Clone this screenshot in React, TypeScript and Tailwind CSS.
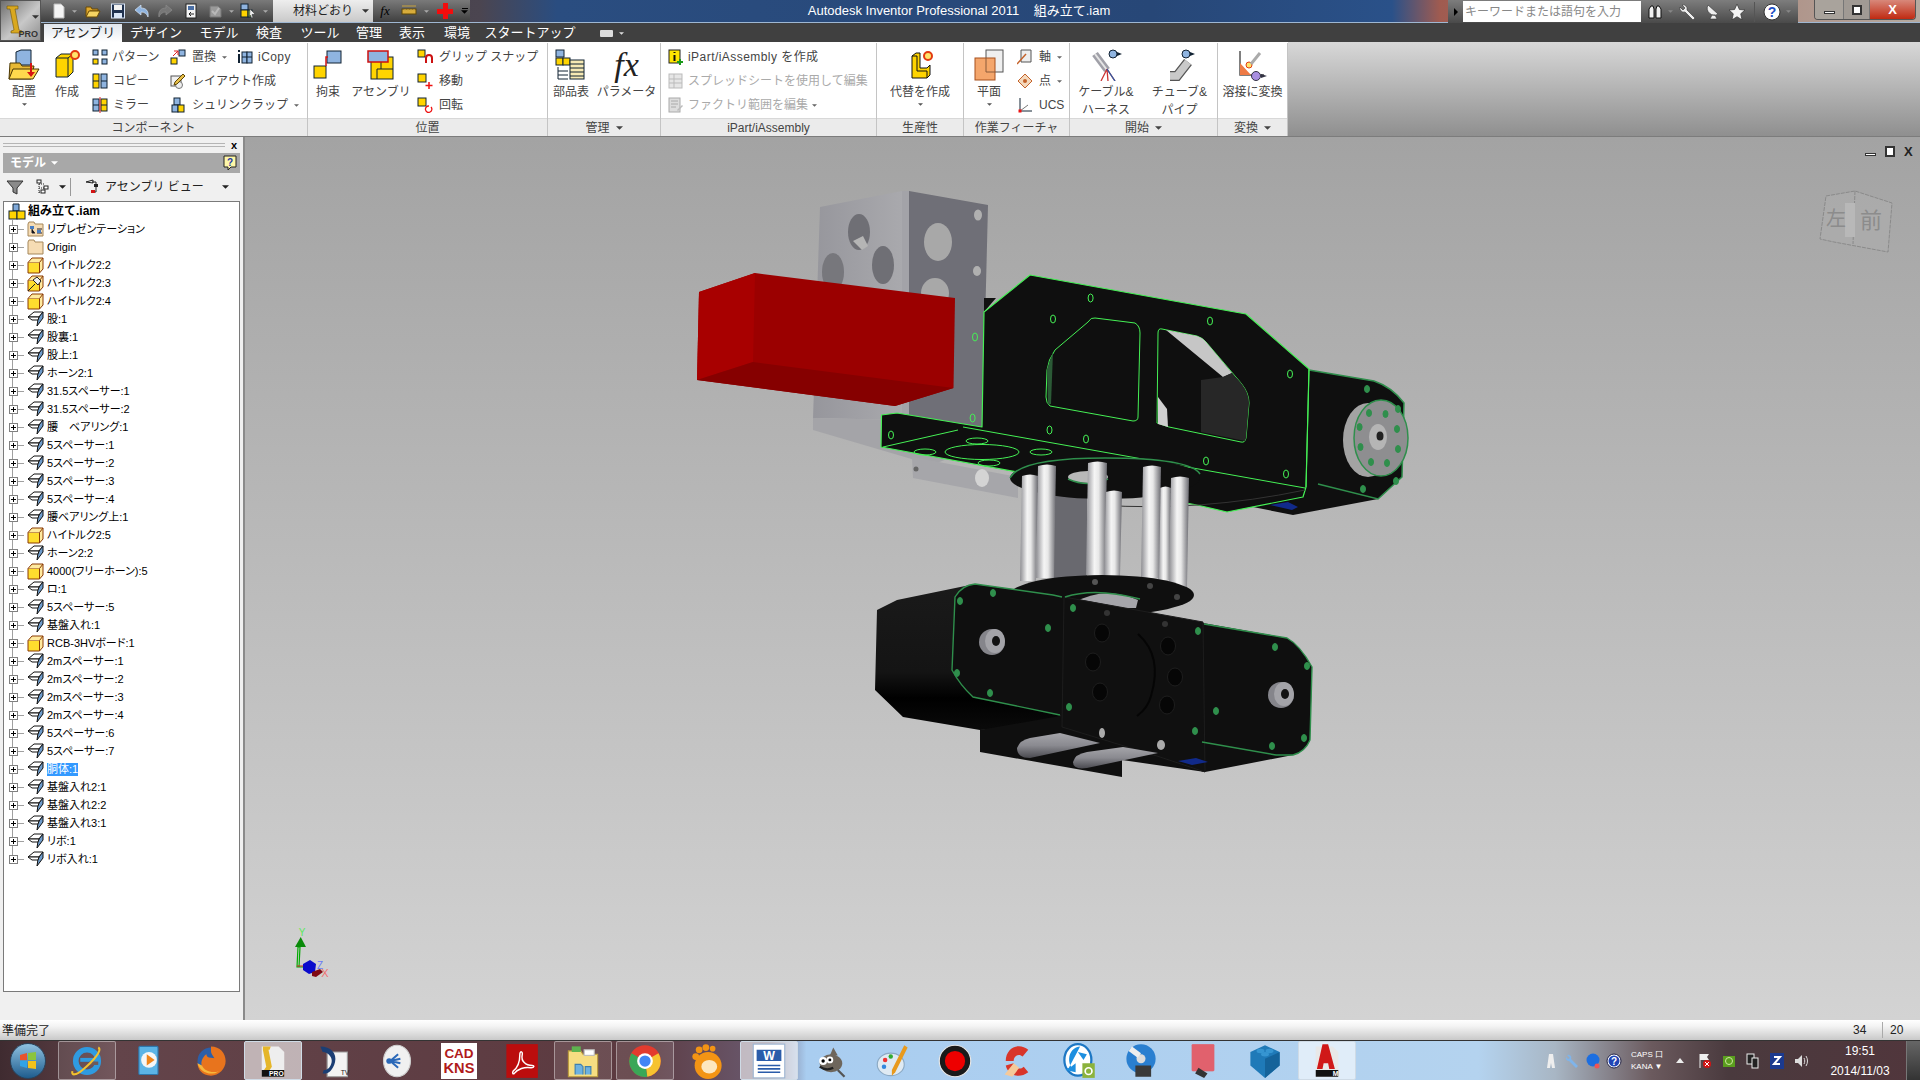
import React from "react";

const Tri = ({ c = "#444", s = 3 }: { c?: string; s?: number }) => (
  <svg width={s * 2 + 1} height={s + 1} viewBox="0 0 6 3" className="shrink-0"><path d="M0 0h6L3 3z" fill={c} /></svg>
);

/* ---------- quick access icons ---------- */
const Qi = ({ n }: { n: string }) => {
  const v: Record<string, React.ReactNode> = {
    doc: <path d="M3 1h7l3 3v11H3z" fill="#f4f4f4" stroke="#bbb" />,
    open: <><path d="M1 4h5l1 2h6v2H5L2 13H1z" fill="#e0a92c" stroke="#6b4a05" /><path d="M4 8h11l-3 6H1z" fill="#f6d463" stroke="#6b4a05" /></>,
    save: <><rect x="1.5" y="1" width="13" height="14" fill="#20324f" stroke="#d7e3f5" /><rect x="4" y="2" width="8" height="5" fill="#f2f2f2" /><rect x="4" y="10" width="8" height="5" fill="#d9e6f7" /></>,
    undo: <path d="M1 7l6-5v3c5 0 8 3 7 9-1-3-3-5-7-5v3z" fill="#8fb4e0" stroke="#d8e6f7" strokeWidth=".7" />,
    redo: <path d="M15 7L9 2v3C4 5 1 8 2 14c1-3 3-5 7-5v3z" fill="#777" stroke="#8d8d8d" strokeWidth=".7" />,
    ret: <><rect x="3" y="1" width="10" height="14" fill="#f4f4f4" stroke="#222" /><rect x="5" y="3" width="6" height="4" fill="#4a6fa5" /><path d="M11 11H6M8 9l-2 2 2 2" stroke="#222" fill="none" /></>,
    upd: <><path d="M3 3h8l3 3v8H3z" fill="#9a9a9a" stroke="#777" /><path d="M5 8l3 3 4-6" stroke="#b9b9b9" strokeWidth="2" fill="none" /></>,
    sel: <><rect x="1" y="1" width="7" height="6" fill="#8fb4e0" stroke="#123" /><rect x="1" y="7" width="7" height="7" fill="#ffd400" stroke="#123" /><rect x="8" y="7" width="4" height="7" fill="#7ea83c" stroke="#123" /><path d="M10 6l5 5-3 .5 1 3-1.500.5-1-3-1 1z" fill="#eee" stroke="#333" strokeWidth=".5" /></>,
    meas: <><rect x="1" y="6" width="14" height="5" fill="#d9ad3b" stroke="#5d4606" /><path d="M1 3h14M4 6v2M7 6v2M10 6v2M13 6v2" stroke="#caa540" fill="none" /></>,
    plus: <path d="M6 0h5v6h5v5h-5v5H6v-5H0V6h6z" fill="#f20d0d" />,
  };
  return <svg width="16" height="16" viewBox="0 0 16 16">{v[n]}</svg>;
};

/* ---------- ribbon icons ---------- */
const Ri = ({ n }: { n: string }) => {
  const v: Record<string, React.ReactNode> = {
    pattern: <><rect x="1" y="1" width="5" height="5" fill="#8fb4e0" stroke="#123" /><rect x="10" y="1" width="5" height="5" fill="#8fb4e0" stroke="#123" /><rect x="1" y="10" width="5" height="5" fill="#ffd400" stroke="#123" /><rect x="10" y="10" width="5" height="5" fill="#8fb4e0" stroke="#123" /></>,
    copy: <><rect x="1" y="1" width="6" height="14" fill="#ffd400" stroke="#123" /><rect x="9" y="1" width="6" height="14" fill="#8fb4e0" stroke="#123" /><path d="M1 8h6M9 8h6" stroke="#123" /></>,
    mirror: <><rect x="1" y="2" width="6" height="12" fill="#8fb4e0" stroke="#123" /><rect x="9" y="2" width="6" height="12" fill="#ffd400" stroke="#123" /><path d="M8 0v16" stroke="#d22" /><path d="M1 8h6M9 8h6" stroke="#123" /></>,
    replace: <><rect x="1" y="9" width="6" height="6" fill="#ffd400" stroke="#123" /><rect x="9" y="1" width="6" height="6" fill="#8fb4e0" stroke="#123" /><path d="M3 7l5-5M4 2h4v4" stroke="#d22" fill="none" /></>,
    icopy: <><path d="M2 1v2M2 5v9" stroke="#123" strokeWidth="2" /><rect x="5" y="3" width="5" height="11" fill="#8fb4e0" stroke="#123" /><rect x="10" y="3" width="5" height="11" fill="#8fb4e0" stroke="#123" /><path d="M5 8h10" stroke="#123" /></>,
    layout: <><rect x="1" y="3" width="10" height="10" fill="#f0f0f0" stroke="#555" /><circle cx="9" cy="12" r="3.500" fill="#eee" stroke="#777" /><path d="M5 9l8-8 2 2-8 8-3 1z" fill="#e8c04a" stroke="#5d4606" /></>,
    shrink: <><rect x="4" y="1" width="6" height="7" fill="#8fb4e0" stroke="#123" /><rect x="2" y="8" width="6" height="7" fill="#8fb4e0" stroke="#123" /><rect x="8" y="8" width="6" height="7" fill="#ffd400" stroke="#123" /></>,
    grip: <><rect x="1" y="1" width="7" height="7" fill="#ffd400" stroke="#123" /><path d="M9 14V9a3 3 0 0 1 6 0v5" stroke="#c11" strokeWidth="2" fill="none" /></>,
    move: <><rect x="1" y="1" width="8" height="8" fill="#ffd400" stroke="#123" /><path d="M12 9v7M8.500 12.500h7" stroke="#e11" strokeWidth="1.500" /></>,
    rot: <><rect x="1" y="1" width="8" height="8" fill="#ffd400" stroke="#123" /><path d="M14 10a3.200 3.200 0 1 1-2-1" stroke="#e11" strokeWidth="1.300" fill="none" /></>,
    ipart: <><rect x="1" y="1" width="11" height="13" fill="#ffe600" stroke="#222" /><path d="M6.500 3v1M6.500 6v6" stroke="#111" strokeWidth="2" /><path d="M12 10v6M9 13h6" stroke="#1b9a1b" strokeWidth="2" /></>,
    sheet: <><rect x="1" y="1" width="13" height="14" fill="#e6e6e6" stroke="#bbb" /><path d="M1 6h13M1 10h13M6 1v14" stroke="#bbb" /></>,
    fact: <><rect x="1" y="1" width="11" height="14" fill="#ddd" stroke="#aaa" /><path d="M3 4h7M3 7h7M3 10h5" stroke="#aaa" /><path d="M9 13l5-5 1 1-5 5z" fill="#bbb" /></>,
    axis: <><path d="M4 1h10v12H4z" fill="#eee" stroke="#555" /><path d="M0 15L9 5" stroke="#c4622a" strokeWidth="1.500" /></>,
    point: <><path d="M8 1l7 7-7 7-7-7z" fill="#f4d9bd" stroke="#c4622a" /><circle cx="8" cy="8" r="2" fill="#c4622a" /></>,
    ucs: <><path d="M3 1v13h12" stroke="#123" fill="none" /><path d="M3 14l8-6" stroke="#777" /><rect x="1.500" y="12.500" width="3" height="3" fill="#e11" /></>,
  };
  return <svg width="16" height="16" viewBox="0 0 16 16" className="shrink-0">{v[n]}</svg>;
};
const Li = ({ n }: { n: string }) => {
  const v: Record<string, React.ReactNode> = {
    place: <><path d="M8 3l5-2h10v15H8z" fill="#8fb4e0" stroke="#123" /><path d="M2 14h10l2 3h12l-3 13H1z" fill="#e8b935" stroke="#4a3602" /><path d="M5 20h26l-6 10H1z" fill="#ffd94d" stroke="#4a3602" /><path d="M22 14v9h-3l4 5 4-5h-3v-9z" fill="#d61414" /></>,
    make: <><path d="M5 9l5-4h12v18l-5 5H5z" fill="#ffd400" stroke="#123" /><path d="M5 9h12v19M17 9l5-4" stroke="#123" fill="none" /><circle cx="24" cy="6" r="4" fill="#ffe46b" stroke="#e23a10" strokeWidth="2" /></>,
    con: <><rect x="2" y="17" width="12" height="12" fill="#ffd400" stroke="#123" /><rect x="15" y="2" width="14" height="12" fill="#8fb4e0" stroke="#123" /><path d="M14 17V8h2" stroke="#d21414" strokeWidth="1.500" fill="none" /></>,
    asm: <><rect x="6" y="8" width="22" height="22" fill="#ffd400" stroke="#123" /><path d="M16 8v12h12v-0M16 20h-4v10" stroke="#123" fill="none" /><rect x="3" y="2" width="20" height="11" fill="#8fb4e0" stroke="#c11" strokeWidth="1.500" /></>,
    bom: <><rect x="1" y="1" width="8" height="7" fill="#8fb4e0" stroke="#123" /><rect x="1" y="9" width="7" height="7" fill="#ffd400" stroke="#123" /><rect x="8" y="9" width="7" height="7" fill="#ffd400" stroke="#123" /><rect x="15" y="11" width="14" height="19" fill="#f6e9b4" stroke="#123" /><path d="M15 15h14M15 19h14M15 23h14M15 27h14M3 18v12M3 22h10M3 26h10M3 30h10" stroke="#123" fill="none" /></>,
    alt: <><path d="M8 7l4-3h4v15h7l3-3v10l-3 3H8z" fill="#ffd400" stroke="#111" /><path d="M8 7h5v15h10v7" stroke="#111" fill="none" /><circle cx="24" cy="7" r="4" fill="#ffe46b" stroke="#e23a10" strokeWidth="2" /></>,
    plane: <><rect x="13" y="1" width="17" height="22" fill="#efefef" stroke="#555" /><rect x="2" y="9" width="20" height="22" fill="#f4a66c" stroke="#a8501c" /><path d="M13 9v14h9" stroke="#8a5a3a" fill="none" /></>,
    cable: <><path d="M5 5l12 16" stroke="#a0a0a8" strokeWidth="7" /><path d="M5 5l12 16" stroke="#e5e5e5" strokeWidth="2" /><path d="M17 20l-6 12M17 20l1 12M17 20l8 12" stroke="#c33" strokeWidth="1.300" /><path d="M17 20l8 12" stroke="#2a5ca8" strokeWidth="1.300" /><circle cx="23" cy="5" r="4" fill="#8fb4e0" stroke="#123" /><path d="M27 3l5 2-5 2z" fill="#123" /></>,
    tube: <><path d="M6 27h7L24 13" stroke="#555" strokeWidth="10" fill="none" /><path d="M6 27h7L24 13" stroke="#c9c9c9" strokeWidth="7.500" fill="none" /><circle cx="22" cy="5" r="4" fill="#8fb4e0" stroke="#123" /><path d="M26 3l5 2-5 2z" fill="#123" /></>,
    weld: <><path d="M3 2v24h24" stroke="#555" strokeWidth="1.500" fill="none" /><path d="M3 14l11 12H3z" fill="#ee7a45" /><circle cx="12" cy="16" r="3" fill="#ffe46b" stroke="#e23a10" /><path d="M14 15l9-11" stroke="#aaa" strokeWidth="3" /><circle cx="19" cy="27" r="4.500" fill="#a88ee0" stroke="#334" /><path d="M24 25l6 2-6 2z" fill="#334" /></>,
  };
  return <svg width="32" height="32" viewBox="0 0 32 32">{v[n]}</svg>;
};

const Large = ({ w, n, lines, chev, fx }: { w: number; n?: string; lines: string[]; chev?: boolean; fx?: boolean }) => (
  <div className="flex shrink-0 flex-col items-center pt-[6px]" style={{ width: w }}>
    <div className="mb-[3px] flex h-[32px] items-center justify-center">
      {fx ? <span className="font-['Liberation_Serif',serif] text-[34px] italic leading-[32px] text-[#222]">fx</span> : <Li n={n!} />}
    </div>
    <div className="flex flex-col items-center gap-px">
      {lines.map((l) => <div key={l} className="h-[17px] whitespace-nowrap text-[12px] leading-[17px] text-[#444]">{l}</div>)}
    </div>
    {chev && <div className="mt-[2px]"><Tri c="#555" s={2} /></div>}
  </div>
);
const Small = ({ n, t, off, chev, gap = 6, wide }: { n: string; t: string; off?: boolean; chev?: boolean; gap?: number; wide?: boolean }) => (
  <div className={`flex h-[24px] items-center whitespace-nowrap text-[12px] ${off ? "text-[#aaaaaa]" : "text-[#444]"}`} style={{ gap }}>
    <Ri n={n} /><span className={wide ? "tracking-[0.45px]" : ""}>{t}</span>{chev && <Tri c="#666" s={2} />}
  </div>
);
const Panel = ({ w, title, chev, children }: { w: number; title: string; chev?: boolean; children: React.ReactNode }) => (
  <div className="flex shrink-0 flex-col border-r border-[#c4c4c4]" style={{ width: w }}>
    <div className="flex h-[75px] bg-white">{children}</div>
    <div className="flex h-[18px] items-center justify-center gap-[6px] border-t border-[#d8d8d8] bg-[#ebebeb] text-[12px] text-[#444]">
      <span>{title}</span>{chev && <Tri c="#444" s={3} />}
    </div>
  </div>
);

/* ---------- tree ---------- */
const PartIcon = () => (
  <svg width="17" height="16" viewBox="0 0 17 16" className="shrink-0"><path d="M1 6l6-5h9l-4 5z" fill="#fff" stroke="#111" /><path d="M12 6l4-5v6l-6 8 1-7z" fill="#6f9ccb" stroke="#111" /><path d="M1 6h11l-1 3H5z" fill="#fff" stroke="#111" /></svg>
);
const CubeIcon = ({ pin }: { pin?: boolean }) => (
  <svg width="17" height="17" viewBox="0 0 17 17" className="shrink-0"><path d="M1 5.500h11.500V16H1z" fill="#ffdd2e" stroke="#8a3a05" /><path d="M1 5.500L5 1h11l-3.500 4.500M12.500 5.500v10.500L16 12V1" fill="#ffeaa0" stroke="#8a3a05" />{pin && <path d="M1 16L8 9M6 5l4-3 4 4-3 4z" stroke="#222" fill="#eee" />}</svg>
);
const FolderIcon = ({ rep }: { rep?: boolean }) => (
  <svg width="17" height="16" viewBox="0 0 17 16" className="shrink-0"><path d="M1 3l1-2h5l1 2h8v12H1z" fill="#f6dcb4" stroke="#a5875b" />{rep && <><rect x="3" y="5" width="4" height="3" fill="#4a7dc0" /><path d="M5 8v4h3M10 8h5M10 12h5" stroke="#223" /><rect x="10" y="9" width="4" height="3" fill="#4a7dc0" /></>}</svg>
);
type Row = { t: string; k?: "p" | "c" | "f" | "r" | "pin"; sel?: boolean };
const rows: Row[] = [
  { t: "リプレゼンテーション", k: "r" }, { t: "Origin", k: "f" }, { t: "ハイトルク2:2", k: "c" }, { t: "ハイトルク2:3", k: "pin" }, { t: "ハイトルク2:4", k: "c" },
  { t: "股:1" }, { t: "股裏:1" }, { t: "股上:1" }, { t: "ホーン2:1" }, { t: "31.5スペーサー:1" }, { t: "31.5スペーサー:2" }, { t: "腰　ベアリング:1" },
  { t: "5スペーサー:1" }, { t: "5スペーサー:2" }, { t: "5スペーサー:3" }, { t: "5スペーサー:4" }, { t: "腰ベアリング上:1" }, { t: "ハイトルク2:5", k: "c" }, { t: "ホーン2:2" },
  { t: "4000(フリーホーン):5", k: "c" }, { t: "ロ:1" }, { t: "5スペーサー:5" }, { t: "基盤入れ:1" }, { t: "RCB-3HVボード:1", k: "c" },
  { t: "2mスペーサー:1" }, { t: "2mスペーサー:2" }, { t: "2mスペーサー:3" }, { t: "2mスペーサー:4" }, { t: "5スペーサー:6" }, { t: "5スペーサー:7" },
  { t: "胴体:1", sel: true }, { t: "基盤入れ2:1" }, { t: "基盤入れ2:2" }, { t: "基盤入れ3:1" }, { t: "リボ:1" }, { t: "リボ入れ:1" },
];
const TreeRow = ({ r, last }: { r: Row; last: boolean }) => (
  <div className="relative flex h-[18px] items-center pl-[5px]">
    <div className={`absolute left-[8px] top-0 w-px bg-[#a0a0a0] ${last ? "h-[9px]" : "h-[18px]"}`} />
    <div className="relative flex h-[9px] w-[9px] shrink-0 items-center justify-center border border-[#808080] bg-white">
      <div className="h-px w-[5px] bg-black" /><div className="absolute h-[5px] w-px bg-black" />
    </div>
    <div className="h-px w-[6px] shrink-0 bg-[#a0a0a0]" />
    <div className="ml-[2px] flex w-[18px] shrink-0 justify-center">
      {r.k === "c" ? <CubeIcon /> : r.k === "pin" ? <CubeIcon pin /> : r.k === "f" ? <FolderIcon /> : r.k === "r" ? <FolderIcon rep /> : <PartIcon />}
    </div>
    <span className={`ml-[3px] whitespace-nowrap text-[11px] leading-[13px] [font-feature-settings:'palt'] ${r.sel ? "bg-[#3399ff] text-white" : "text-black"}`}>{r.t}</span>
  </div>
);

/* ---------- taskbar ---------- */
const T = ({ n }: { n: string }) => {
  const v: Record<string, React.ReactNode> = {
    ie: <><circle cx="16" cy="16" r="10" fill="none" stroke="#2f9be0" strokeWidth="5" /><path d="M10 15h14" stroke="#2f9be0" strokeWidth="3.500" /><path d="M26 18l-8 0" stroke="#6f5a5a" strokeWidth="3" /><path d="M26 4C30 6 22 16 12 24 6 29 2 29 3 25" fill="none" stroke="#f3c22d" strokeWidth="1.800" /></>,
    wmp: <><rect x="7" y="3" width="17" height="25" rx="1" fill="#5cb4e6" stroke="#2e78ad" /><circle cx="16" cy="15" r="7" fill="#f6f6f6" /><path d="M14 10l7 5-7 5z" fill="#f0851a" /></>,
    ff: <><circle cx="16" cy="16" r="12" fill="#2d5fa8" /><path d="M16 3c8 0 13 6 13 13s-6 13-13 13C8 29 4 23 4 18c1 2 3 3 4 3-2-5 2-10 4-11 0 2 1 3 4 3 5 0 7 3 6 7-1-6-6-9-6-13z" fill="#e8741d" /><path d="M4 18c2 8 12 12 19 7-6 2-13 0-15-5z" fill="#f6b73c" /></>,
    inv: <><path d="M6 3h15l5 5v22H6z" fill="#eeeeee" /><path d="M6 24h20v6H6z" fill="#111" /><path d="M7 3h7l-1 3h-1l3 15-2 3H8l2-3L7 6z" fill="#e5b62a" /><text x="19" y="29.500" fontSize="6" fontWeight="700" fill="#fff" textAnchor="middle" fontFamily="Liberation Sans">PRO</text></>,
    dtv: <><path d="M9 8h18v22H9z" fill="#f3f3f3" stroke="#999" /><path d="M3 3c9 0 15 6 13 14S9 28 5 27l1-3c4 0 6-3 7-7s-3-9-8-9z" fill="#1b3e74" /><text x="21" y="28" fontSize="6" fill="#222" fontFamily="Liberation Sans">TV</text></>,
    ink: <><ellipse cx="16" cy="16" rx="12" ry="14" fill="#f0f0f0" stroke="#ccc" /><path d="M7 16h4M10 16l7-6M10 16l9-2M10 16l9 2M10 16l7 6" stroke="#2a68b8" strokeWidth="1.800" /><circle cx="9" cy="16" r="2.500" fill="#2a68b8" /></>,
    cad: <><rect x="0" y="0" width="32" height="32" fill="#fff" /><text x="16" y="13" fontSize="12" fill="#b01a1a" textAnchor="middle" fontWeight="700" fontFamily="Liberation Sans">CAD</text><text x="16" y="27" fontSize="13" fill="#b01a1a" textAnchor="middle" fontWeight="700" fontFamily="Liberation Sans">KNS</text></>,
    pdf: <><rect x="3" y="1" width="28" height="30" fill="#bb0d0d" /><path d="M9 25c4-3 6-9 6-15 0-3 3-3 2 1-1 5 3 9 9 9 2 0 2 2-1 2-6-1-12 1-15 5-1 1-2 0-1-2z" fill="none" stroke="#fff" strokeWidth="1.300" /></>,
    exp: <><path d="M3 7h11l2 3h13v20H3z" fill="#f6dd82" stroke="#b99b3d" /><rect x="6" y="3" width="8" height="5" fill="#5eb34f" /><rect x="17" y="6" width="9" height="5" fill="#fff" stroke="#bbb" /><path d="M9 28v-9h5l2 2v7M18 28v-7h5v7" fill="#6db1e0" stroke="#3d7fae" /></>,
    chr: <><circle cx="16" cy="16" r="14" fill="#e33b2e" /><path d="M16 16L28 9a14 14 0 0 1-10 21z" fill="#f6c330" /><path d="M16 16L18 30A14 14 0 0 1 4 9z" fill="#3aa757" /><circle cx="16" cy="16" r="7" fill="#fff" /><circle cx="16" cy="16" r="5" fill="#4285f4" /></>,
    pic: <><circle cx="17" cy="20" r="12" fill="#f39414" /><ellipse cx="18" cy="21" rx="7" ry="6" fill="#fde7bf" /><circle cx="6" cy="12" r="3" fill="#f39414" /><circle cx="9" cy="6" r="3" fill="#f39414" /><circle cx="15" cy="4" r="3" fill="#f39414" /><circle cx="21" cy="5" r="2.500" fill="#f39414" /></>,
    word: <><rect x="2" y="1" width="28" height="30" fill="#fff" stroke="#9eb6d2" /><path d="M5 6h22v10H5z" fill="#2a5caa" /><text x="16" y="15" fontSize="11" fill="#fff" fontWeight="700" textAnchor="middle" fontFamily="Liberation Sans">W</text><path d="M6 20h20M6 23h20M6 26h20" stroke="#2a5caa" strokeWidth="1.500" /></>,
    gimp: <><ellipse cx="16" cy="18" rx="10" ry="8" fill="#6e665c" /><path d="M18 4l-3 7 7 0z" fill="#6e665c" /><circle cx="9" cy="16" r="3.500" fill="#fff" /><circle cx="15" cy="15" r="3" fill="#fff" /><circle cx="9" cy="16" r="1.500" fill="#000" /><circle cx="15" cy="15" r="1.300" fill="#000" /><path d="M6 21c4 3 8 3 12 1" stroke="#222" strokeWidth="2" fill="none" /><path d="M22 24l6 6" stroke="#555" strokeWidth="2" /></>,
    paint: <><ellipse cx="14" cy="19" rx="12" ry="10" fill="#dfeaf3" stroke="#8ba9c4" /><circle cx="9" cy="15" r="2" fill="#e33" /><circle cx="14" cy="12" r="2" fill="#3a3" /><circle cx="8" cy="21" r="2" fill="#38d" /><path d="M26 2l3 2-11 22-3 3 0-5z" fill="#e89a1e" /></>,
    rec: <><circle cx="16" cy="16" r="14" fill="#1a1a1a" stroke="#e8e8e8" /><circle cx="16" cy="16" r="9" fill="#e00" /></>,
    cc: <><path d="M26 6c-8-7-20-2-20 10h7c0-5 5-7 8-4z" fill="#d8352a" /><path d="M26 26c-8 6-18 3-20-6l7-2c1 5 6 6 9 3z" fill="#d8352a" /><path d="M5 28l8-10 5 4-6 8z" fill="#f5c99a" /></>,
    sync: <><ellipse cx="15" cy="15" rx="12" ry="14" fill="#fff" stroke="#1d77c4" strokeWidth="2" /><path d="M17 3C8 4 5 14 9 21l4-3v8l-9-2 3-2" fill="#1d8fe0" /><path d="M15 8l8 2-3 5z" fill="#1d8fe0" /><rect x="19" y="18" width="11" height="13" fill="#8cb33c" /><circle cx="24.500" cy="25" r="3" fill="none" stroke="#fff" strokeWidth="1.500" /></>,
    disc: <><circle cx="16" cy="14" r="13" fill="#2a7fd0" /><circle cx="16" cy="14" r="4" fill="#ddd" /><path d="M8 3l8 6-3 4-8-6z" fill="#eee" /><rect x="11" y="20" width="14" height="10" fill="#3a3a3a" /></>,
    tab: <><rect x="6" y="1" width="20" height="24" rx="1" fill="#d9534a" /><path d="M6 1h20v24H6z" fill="#e96f8f" opacity=".5" /><path d="M12 22l8 5-3 4-8-4z" fill="#333" /></>,
    lego: <><path d="M16 2l13 6v12L16 31 3 20V8z" fill="#1f7ab8" /><path d="M16 14l13-6v12L16 31z" fill="#15639a" /><ellipse cx="12" cy="7" rx="3.500" ry="2" fill="#3695d1" /><ellipse cx="20" cy="7" rx="3.500" ry="2" fill="#3695d1" /><ellipse cx="16" cy="10" rx="3.500" ry="2" fill="#3695d1" /></>,
    acad: <><path d="M6 3h15l5 5v22H6z" fill="#e8e8e8" /><path d="M6 24h20v6H6z" fill="#111" /><path d="M12 1h5l6 22h-5l-1-5h-4l-1 5H7z" fill="#d01818" /><text x="21" y="29.500" fontSize="6" fontWeight="700" fill="#fff" fontFamily="Liberation Sans">M</text></>,
  };
  return <svg width="36" height="36" viewBox="0 0 32 32" className="shrink-0">{v[n]}</svg>;
};
const slots: { n: string; a?: 0 | 1 | 2 }[] = [
  { n: "ie", a: 1 }, { n: "wmp" }, { n: "ff" }, { n: "inv", a: 2 }, { n: "dtv" }, { n: "ink" }, { n: "cad" }, { n: "pdf" }, { n: "exp", a: 1 }, { n: "chr", a: 1 }, { n: "pic" }, { n: "word", a: 2 },
  { n: "gimp" }, { n: "paint" }, { n: "rec" }, { n: "cc" }, { n: "sync" }, { n: "disc" }, { n: "tab" }, { n: "lego" }, { n: "acad", a: 2 },
];
const Tray = ({ n }: { n: string }) => {
  const v: Record<string, React.ReactNode> = {
    a: <path d="M6 1h4l2 14H9l-1-5-1 5H4z" fill="#eee" />,
    w: <path d="M3 2a3 3 0 0 1 4 4l7 7-2 2-7-7a3 3 0 0 1-3-4l2 2 2-1z" fill="#7fb4ea" />,
    b: <><circle cx="8" cy="7" r="6.500" fill="#1c6ee0" /><circle cx="12" cy="13" r="2.500" fill="#e55" /></>,
    q: <><circle cx="8" cy="8" r="7" fill="#fff" stroke="#224" /><circle cx="8" cy="8" r="5.500" fill="#1f44b5" /><text x="8" y="11.500" fontSize="10" fontWeight="700" fill="#fff" textAnchor="middle" fontFamily="Liberation Sans">?</text></>,
    flag: <><path d="M3 1v14" stroke="#eee" /><path d="M3 1h9l-2 3 2 3H3z" fill="#eee" /><circle cx="10" cy="11" r="4" fill="#d21414" /><path d="M8 9l4 4M12 9l-4 4" stroke="#fff" /></>,
    nv: <><rect x="2" y="3" width="12" height="11" fill="#5a9e1e" /><circle cx="8" cy="8" r="3.500" fill="none" stroke="#cfe8a0" /></>,
    net: <><rect x="2" y="1" width="7" height="10" fill="#222" stroke="#eee" /><rect x="7" y="5" width="6" height="10" fill="#222" stroke="#eee" /></>,
    z: <><rect x="1" y="0" width="14" height="16" fill="#1b3a8f" /><path d="M5 4h6L5 11h6" stroke="#fff" strokeWidth="2" fill="none" /></>,
    sp: <><path d="M2 6h3l4-4v12l-4-4H2z" fill="#ddd" /><path d="M11 5c1 2 1 4 0 6M13 3c2 3 2 7 0 10" stroke="#ddd" fill="none" /></>,
  };
  return <svg width="16" height="16" viewBox="0 0 16 16" className="shrink-0">{v[n]}</svg>;
};

/* ---------- 3D model (all coordinates are screen pixels) ---------- */
const B = "#45f055";
const D = "#2f8f4c";
const Cyl = ({ x, w, t, b }: { x: number; w: number; t: number; b: number }) => (
  <path d={`M${x} ${t}q${w / 2} -3 ${w} 0l-2 ${b - t}h-${w}z`} fill="url(#cyl)" />
);
const Holes = ({ list, c, fill }: { list: number[][]; c: string; fill?: boolean }) => (
  <>{list.map(([x, y], i) => <ellipse key={i} cx={x} cy={y} rx={2.500} ry={fill ? 3.500 : 4} fill={fill ? c : "none"} stroke={c} />)}</>
);
const Model = () => (
  <svg className="absolute inset-0" width="1675" height="883" viewBox="245 137 1675 883">
    <defs>
      <linearGradient id="cyl" x1="0" x2="1" y1="0" y2="0"><stop offset="0" stopColor="#8d8d92" /><stop offset=".4" stopColor="#f5f5f5" /><stop offset=".6" stopColor="#e8e8e8" /><stop offset="1" stopColor="#6a6a70" /></linearGradient>
      <linearGradient id="lface" x1="0" x2="1" y1="0" y2="0"><stop offset="0" stopColor="#96969c" /><stop offset="1" stopColor="#a9a9ad" /></linearGradient>
      <linearGradient id="rod" x1="0" x2="0" y1="0" y2="1"><stop offset="0" stopColor="#a5a5aa" /><stop offset=".5" stopColor="#8a8a90" /><stop offset="1" stopColor="#4a4a50" /></linearGradient>
      <linearGradient id="dark" x1="0" x2="0" y1="0" y2="1"><stop offset="0" stopColor="#1a1a1a" /><stop offset=".6" stopColor="#141414" /><stop offset=".78" stopColor="#000" /><stop offset="1" stopColor="#0a0a0a" /></linearGradient>
    </defs>

    {/* bracket */}
    <path d="M820 207L902 191V420L813 418z" fill="url(#lface)" />
    <path d="M902 191h7l79 14-6 240-80-25z" fill="#6f6f77" />
    <path d="M902 191h7v230h-7z" fill="#a3a3a8" />
    <path d="M813 418l89 2 80 25-50 20-119-35z" fill="#a4a4a8" />
    <ellipse cx="859" cy="232" rx="11" ry="18" fill="#6f6f75" />
    <path d="M853 241l9 9 6-4-5-10z" fill="#b5b5b5" />
    <ellipse cx="883" cy="265" rx="11" ry="19" fill="#6f6f75" />
    <ellipse cx="833" cy="272" rx="11" ry="19" fill="#77777c" />
    <ellipse cx="938" cy="242" rx="14" ry="19" fill="#a8a8a8" />
    <ellipse cx="978" cy="215" rx="4" ry="5.500" fill="#b0b0b0" />
    <ellipse cx="977" cy="271" rx="4" ry="5" fill="#b0b0b0" />
    <ellipse cx="935" cy="293" rx="14" ry="15" fill="#a8a8a8" />
    <path d="M1018 477L1087 490V578H1053z" fill="#69696f" />
    <path d="M912 457L1018 477v21L913 478z" fill="#a6a6aa" />
    <ellipse cx="982" cy="478" rx="7" ry="9" fill="#d4d4d4" />
    <circle cx="916" cy="469" r="2.500" fill="#666" />

    {/* upper servo and plate */}
    <path d="M1253 507L1309 370l65 11q18 6 30 22l-2 74-24 22-85 16z" fill="#0f0f0f" />
    <path d="M1309 370l65 11q18 6 30 22l-2 74-24 22-60-15" fill="none" stroke={D} strokeWidth="1.500" />
    <path d="M984 298h12L984 312z" fill="#111" />
    <path d="M984 312L1030 275 1246 314 1309 369 1306 487 1303 497 1227 512 1197 505 881 447 881.500 415 897 413 982 427z" fill="#0f0f0f" stroke={B} strokeWidth="1.200" strokeLinejoin="round" />
    <path d="M963 427L1305 488M883 447L958 430M1309 369l-3 118" fill="none" stroke={B} />
    <path d="M1100 505q100 7 205-15" fill="none" stroke="#333" />
    <ellipse cx="982" cy="452" rx="37" ry="7.500" fill="none" stroke={B} />
    <ellipse cx="925" cy="452" rx="11" ry="3" fill="none" stroke={B} />
    <ellipse cx="977" cy="441" rx="11" ry="3" fill="none" stroke={B} />
    <ellipse cx="1041" cy="452" rx="11" ry="3" fill="none" stroke={B} />
    <ellipse cx="989" cy="463" rx="11" ry="3" fill="none" stroke={B} />
    <path d="M1050 406L1133 421q5 0 5-4l2-84q0-7-5-10L1095 318q-4-1-7 4L1055 350q-7 10-8 20l-1 27q0 6 4 9z" fill="#0f0f0f" stroke={B} />
    <path d="M1048 404l-1-35 6-17-2 52z" fill="#2b5a36" />
    <path d="M1169 427L1157 423 1158 333q0-5 4-4L1197 336q6 2 9 6L1241 383q8 10 8 20l-3 35q-1 5-5 4z" fill="#0f0f0f" stroke={B} />
    <path d="M1166 330L1197 336q6 2 9 6L1232 373 1223 377z" fill="#c6c6c6" />
    <path d="M1201 380l22-3 9-4 9 10q8 10 8 20l-3 35-1 3-44-9z" fill="#272727" />
    <path d="M1158 397l9 12 1 18-10-3z" fill="#cfcfcf" />
    <Holes c={B} list={[[1090.600, 298], [1053, 319], [1210, 321], [1290, 374], [975, 337], [1049.500, 430], [1086, 439], [1206, 461], [1286, 474], [891, 435], [972.600, 418]]} />
    <path d="M1270 505l18-3 10 5-6 3z" fill="#112a8a" />
    <ellipse cx="1368" cy="440" rx="25" ry="37" fill="#a3a3a3" />
    <ellipse cx="1381" cy="438" rx="27" ry="38" fill="#8e8e90" stroke={D} strokeWidth="1.500" />
    <ellipse cx="1378" cy="437" rx="9" ry="13" fill="#b5b5b5" />
    <ellipse cx="1380" cy="436" rx="3.500" ry="4.500" fill="#222" />
    <Holes c={D} fill list={[[1369, 413], [1385.500, 414], [1397, 429], [1398, 449], [1387, 463], [1371, 462], [1360.500, 447], [1359.600, 427], [1367, 389], [1363, 489], [1396, 481], [1398, 409]]} />

    {/* upper flange and pillars */}
    <Cyl x={1160} w={11} t={488} b={580} />
    <Cyl x={1105} w={16} t={492} b={576} />
    <ellipse cx="1105" cy="478" rx="95" ry="21" fill="#0f0f0f" />
    <ellipse cx="1088" cy="477" rx="20" ry="6" fill="#b8b8b8" />
    <path d="M1068 479q20 9 40 0" stroke={D} fill="none" strokeWidth="1.500" />
    <path d="M1010 478q10-20 95-20t95 16" stroke={D} fill="none" strokeWidth="1.500" />
    <Cyl x={1022} w={16} t={476} b={581} />
    <Cyl x={1038} w={18} t={466} b={578} />
    <Cyl x={1088} w={19} t={463} b={575} />
    <Cyl x={1106} w={16} t={492} b={576} />
    <Cyl x={1160} w={11} t={488} b={580} />
    <Cyl x={1143} w={18} t={467} b={578} />
    <Cyl x={1171} w={18} t={478} b={587} />

    {/* red box */}
    <path d="M699 292L755 273 955 298 953.500 388 895 406 697 380z" fill="#9b0000" />
    <path d="M699 292L755 273 753 362 697 380z" fill="#a80000" />
    <path d="M697 380L753 362 953.500 388 895 406z" fill="#860000" />

    {/* lower assembly */}
    <ellipse cx="1102" cy="595" rx="92" ry="20" fill="#0f0f0f" />
    <path d="M1073 603q32-18 65-3l-2 8h-60z" fill="#a5a5aa" />
    <circle cx="1095" cy="582" r="3" fill="#555" /><circle cx="1150" cy="586" r="3" fill="#444" /><circle cx="1177" cy="597" r="3" fill="#444" />
    <path d="M877 610L897 600 970 585 1000 650 1060 715 1060 727 980 730 903 717 875 690z" fill="url(#dark)" />
    <path d="M980 730L1060 716 1205 742 1205 772 1122 760 1122 777 980 752z" fill="#0f0f0f" />
    <path d="M975 584L1067 597 1203 623 1287 638Q1300 645 1312 667L1310 740Q1305 752 1293 755L1205 772 1160 757 1062 727 1060 715 973 697Q960 685 952 670L955 597Q962 585 975 584z" fill="#0f0f0f" />
    <path d="M1064 597L1203 622 1205 772 1160 757 1062 727z" fill="#101010" stroke="#1d1d1d" />
    <path d="M1062 597l-9-2-78-11q-13 1-20 13l-3 73q8 15 21 27l87 18M1204 624l83 14Q1300 645 1312 667L1310 740Q1305 752 1293 755L1276 755 1202 742" fill="none" stroke={D} strokeWidth="1.400" />
    <path d="M1065 597q30-10 75 2" fill="none" stroke={D} strokeWidth="1.400" />
    {[[1102, 633], [1093, 662], [1100, 692], [1168, 646], [1175, 677], [1167, 705]].map(([x, y]) => (
      <ellipse key={x + y} cx={x} cy={y} rx="7.500" ry="9" fill="#060606" stroke="#1e1e1e" />
    ))}
    <path d="M1138 634q25 22 13 62-3 12-14 20" fill="none" stroke="#050505" strokeWidth="2" />
    <path d="M1017 748Q1020 740 1030 738L1060 733 1100 743 1030 758Q1017 758 1017 748z" fill="url(#rod)" />
    <path d="M1073 762Q1075 754 1087 752L1123 747 1158 753 1087 768Q1073 770 1073 762z" fill="url(#rod)" />
    <ellipse cx="1102" cy="733" rx="3" ry="5" fill="#aaa" /><ellipse cx="1161" cy="745" rx="4" ry="5" fill="#aaa" />
    <circle cx="1107" cy="613" r="3" fill="#333" /><circle cx="1165" cy="624" r="3" fill="#333" />
    <Holes c={D} fill list={[[993, 593], [960, 601], [1048, 628], [957, 673], [990, 693], [1073, 608], [1069, 707], [1198, 631], [1275, 647], [1307, 666], [1216, 711], [1195, 731], [1272, 746], [1304, 738]]} />
    {[[992, 642], [1281, 695]].map(([x, y]) => (
      <g key={x}><ellipse cx={x} cy={y} rx="13" ry="13" fill="#85858b" /><ellipse cx={x + 3} cy={y - 1} rx="10" ry="12" fill="#a3a3a8" /><ellipse cx={x + 4} cy={y - 1} rx="4" ry="5" fill="#111" /></g>
    ))}
    <path d="M1178 761l18-3 12 4-16 3z" fill="#112a8a" />

    {/* triad */}
    <path d="M297 967l1-20h2l-1 20zM297 967h14" stroke="#0a0" fill="none" strokeWidth="1.200" />
    <path d="M300.700 937L306 947H295z" fill="#0a8a0a" />
    <path d="M297 966h12" stroke="#c22" />
    <path d="M303 964l7-4 6 4-1 8-6 2-6-4z" fill="#0a0acc" />
    <path d="M312 972l8-3 3 3-7 5-4-1z" fill="#800a14" />
    <text x="302" y="936" fontSize="10" fill="#5de85d" textAnchor="middle" fontFamily="Liberation Sans">Y</text>
    <text x="320" y="969" fontSize="10" fill="#6a7cf5" textAnchor="middle" fontFamily="Liberation Sans">Z</text>
    <text x="325" y="977" fontSize="11" fill="#f07070" textAnchor="middle" fontFamily="Liberation Sans">X</text>

    {/* view cube */}
    <g fill="none" stroke="#8a8a8a" strokeDasharray="4 1">
      <path d="M1826 196l29-5 37 12-4 49-54-10-14-3z" fill="#adadad" fillOpacity=".6" />
      <path d="M1855 191l-2 53" />
    </g>
    <rect x="1845" y="203" width="10" height="34" fill="#b8b8b8" />
    <text x="1836" y="226" fontSize="20" fill="#8c8c8c" textAnchor="middle" fontFamily="Noto Sans CJK JP">左</text>
    <text x="1871" y="228" fontSize="22" fill="#8c8c8c" textAnchor="middle" fontFamily="Noto Sans CJK JP">前</text>
  </svg>
);

export default function App() {
  return (
    <div className="relative flex h-[1080px] w-[1920px] flex-col overflow-hidden bg-[#404040] font-['Liberation_Sans','Noto_Sans_CJK_JP',sans-serif]">
      {/* app button */}
      <div className="absolute left-0 top-0 z-10 h-[41px] w-[41px] border border-[#555] bg-[linear-gradient(135deg,#6e6e6e,#c8c8c8_55%,#8f8f8f)]">
        <svg width="26" height="32" viewBox="0 0 26 32" className="absolute left-[2px] top-[2px]"><path d="M4 3h11v3h-3l4 21 3 1v2H8v-2l3-1L7 6H4z" fill="#d9a820" stroke="#6f5408" strokeWidth=".6" /></svg>
        <div className="absolute left-[31px] top-[14px]"><Tri c="#333" s={3} /></div>
        <span className="absolute bottom-[1px] right-[2px] text-[9px] font-bold leading-[10px] text-[#333]">PRO</span>
      </div>

      {/* title bar */}
      <div className="relative flex h-[23px] shrink-0 items-stretch border-b border-[#9fb7d2] bg-[linear-gradient(90deg,#3a3438_0%,#4b4550_25%,#2a4d80_29%,#274777_60%,#2a5189_72.5%,#a05b50_75%,#b5aaa0_100%)]">
        <div className="flex h-[22px] w-[470px] shrink-0 items-center bg-[linear-gradient(180deg,#7a7a7a,#3f3f3f)] pl-[50px]">
          {([["doc", 18], [0, 12], ["open", 26], ["save", 24], ["undo", 24], ["redo", 22], ["ret", 30], ["upd", 18], [0, 14], ["sel", 20], [0, 15]] as [string | number, number][]).map(([n, w], i) => (
            <div key={i} className="flex shrink-0 items-center justify-center" style={{ width: w }}>{n ? <Qi n={n as string} /> : <Tri c="#aaa" s={2} />}</div>
          ))}
          <div className="flex h-[22px] w-[100px] shrink-0 items-center justify-between bg-[linear-gradient(180deg,#eeeeee,#c9c9c9)] pl-[20px] pr-[4px] text-[12px] text-[#222]"><span>材料どおり</span><Tri c="#333" s={3} /></div>
          <div className="flex w-[24px] shrink-0 justify-center font-['Liberation_Serif',serif] text-[13px] italic text-black">fx</div>
          <div className="flex w-[24px] shrink-0 justify-center"><Qi n="meas" /></div>
          <div className="flex w-[10px] shrink-0 justify-center"><Tri c="#aaa" s={2} /></div>
          <div className="flex w-[28px] shrink-0 justify-center"><Qi n="plus" /></div>
          <div className="flex w-[11px] shrink-0 flex-col items-center gap-px"><div className="h-px w-[6px] bg-black" /><Tri c="#000" s={3} /></div>
        </div>
        <div className="flex w-[978px] shrink-0 items-center justify-center whitespace-pre text-[13px] text-white">Autodesk Inventor Professional 2011{"    "}組み立て.iam</div>
        <div className="flex h-[23px] w-[350px] shrink-0 items-center bg-[linear-gradient(180deg,#7d7d7d,#4a4a4a)]">
          <div className="flex w-[15px] shrink-0 justify-center"><svg width="4" height="8" viewBox="0 0 4 8"><path d="M0 0l4 4-4 4z" fill="#000" /></svg></div>
          <div className="flex h-[21px] w-[178px] shrink-0 items-center bg-white pl-[2px] text-[12px] text-[#888]">キーワードまたは語句を入力</div>
          <svg width="18" height="18" viewBox="0 0 18 18" className="ml-[5px]"><path d="M3 6l2-3h2l1 3v9H3zM10 6l1-3h2l2 3v9h-5z" fill="#f0f0f0" stroke="#111" /></svg>
          <div className="ml-[4px]"><Tri c="#888" s={2} /></div>
          <svg width="18" height="18" viewBox="0 0 18 18" className="ml-[6px]"><path d="M3 2a4 4 0 0 1 5 5l8 8-2 2-8-8a4 4 0 0 1-5-5l3 3 2-2z" fill="#eee" stroke="#333" strokeWidth=".6" /></svg>
          <svg width="18" height="18" viewBox="0 0 18 18" className="ml-[7px]"><path d="M4 2l10 9a7 7 0 0 1-10-9zM8 12l-2 4h7l-2-4z" fill="#eee" stroke="#333" strokeWidth=".6" /></svg>
          <svg width="18" height="18" viewBox="0 0 18 18" className="ml-[6px]"><path d="M9 1l2.400 5.500 5.600.5-4.300 3.800 1.300 6L9 13.700 4 16.800l1.300-6L1 7l5.600-.5z" fill="#f4f4f4" stroke="#333" strokeWidth=".7" /></svg>
          <div className="ml-[8px] h-[20px] w-px bg-[#555]" />
          <svg width="18" height="18" viewBox="0 0 18 18" className="ml-[8px]"><circle cx="9" cy="9" r="8" fill="#fff" stroke="#333" /><text x="9" y="14" fontSize="14" fontWeight="700" fill="#1f4fc5" textAnchor="middle" fontFamily="Liberation Sans">?</text></svg>
          <div className="ml-[5px]"><Tri c="#888" s={2} /></div>
        </div>
        <div className="flex flex-1 items-start justify-end pr-[4px]">
          <div className="flex h-[20px] w-[102px] overflow-hidden rounded-b-[4px] border border-t-0 border-[#555] text-white">
            <div className="flex w-[29px] items-center justify-center border-r border-[#777] bg-[#a9a39c]"><div className="mt-[6px] h-[3px] w-[11px] border border-[#333] bg-white" /></div>
            <div className="flex w-[26px] items-center justify-center border-r border-[#777] bg-[#a09a94]"><div className="h-[10px] w-[10px] border-2 border-[#333] bg-white" /></div>
            <div className="flex flex-1 items-center justify-center bg-[linear-gradient(180deg,#d8887a,#c02a12)] text-[13px] font-bold">X</div>
          </div>
        </div>
      </div>

      {/* tabs */}
      <div className="flex h-[19px] shrink-0 items-stretch bg-[#404040] pl-[44px] pt-px text-[13px] text-white">
        <div className="flex w-[78px] items-center justify-center bg-[linear-gradient(180deg,#dfe5ec,#ffffff)] text-[#222]">アセンブリ</div>
        {([["デザイン", 68], ["モデル", 58], ["検査", 42], ["ツール", 60], ["管理", 38], ["表示", 48], ["環境", 42], ["スタートアップ", 104]] as [string, number][]).map(([t, w]) => (
          <div key={t} className="flex items-center justify-center whitespace-nowrap" style={{ width: w }}>{t}</div>
        ))}
        <div className="ml-[18px] flex items-center gap-[6px]"><div className="h-[7px] w-[13px] rounded-[1px] bg-[#ddd]" /><Tri c="#ddd" s={2} /></div>
      </div>

      {/* ribbon */}
      <div className="flex h-[95px] shrink-0 border-b border-[#7c7c7c] bg-[linear-gradient(180deg,#d8d8d8,#8f8f8f)]">
        <div className="flex border-t border-white">
          <Panel w={308} title="コンポーネント">
            <Large w={48} n="place" lines={["配置"]} chev />
            <Large w={38} n="make" lines={["作成"]} />
            <div className="ml-[6px] flex w-[78px] shrink-0 flex-col pt-[2px]">
              <Small n="pattern" t="パターン" gap={4} /><Small n="copy" t="コピー" gap={5} /><Small n="mirror" t="ミラー" gap={5} />
            </div>
            <div className="flex flex-col pt-[2px]">
              <div className="flex items-center gap-[5px]"><Small n="replace" t="置換" chev /><div className="ml-[5px]"><Small n="icopy" t="iCopy" gap={5} wide /></div></div>
              <Small n="layout" t="レイアウト作成" /><Small n="shrink" t="シュリンクラップ" chev />
            </div>
          </Panel>
          <Panel w={240} title="位置">
            <Large w={40} n="con" lines={["拘束"]} />
            <Large w={66} n="asm" lines={["アセンブリ"]} />
            <div className="ml-[3px] flex flex-col pt-[2px]"><Small n="grip" t="グリップ スナップ" /><Small n="move" t="移動" /><Small n="rot" t="回転" /></div>
          </Panel>
          <Panel w={113} title="管理" chev>
            <Large w={46} n="bom" lines={["部品表"]} />
            <Large w={65} fx lines={["パラメータ"]} />
          </Panel>
          <Panel w={216} title="iPart/iAssembly">
            <div className="ml-[7px] flex flex-col pt-[2px]"><Small n="ipart" t="iPart/iAssembly を作成" gap={4} wide /><Small n="sheet" t="スプレッドシートを使用して編集" off gap={4} /><Small n="fact" t="ファクトリ範囲を編集" off chev gap={4} /></div>
          </Panel>
          <Panel w={87} title="生産性"><Large w={86} n="alt" lines={["代替を作成"]} chev /></Panel>
          <Panel w={106} title="作業フィーチャ">
            <Large w={50} n="plane" lines={["平面"]} chev />
            <div className="ml-[3px] flex flex-col pt-[2px]"><Small n="axis" t="軸" chev /><Small n="point" t="点" chev /><Small n="ucs" t="UCS" /></div>
          </Panel>
          <Panel w={148} title="開始" chev>
            <Large w={72} n="cable" lines={["ケーブル&", "ハーネス"]} />
            <div className="mt-[6px] h-[64px] w-px bg-[#dddddd]" />
            <Large w={75} n="tube" lines={["チューブ&", "パイプ"]} />
          </Panel>
          <Panel w={70} title="変換" chev><Large w={69} n="weld" lines={["溶接に変換"]} /></Panel>
        </div>
      </div>

      {/* main */}
      <div className="flex h-[883px] shrink-0">
        <div className="flex w-[245px] shrink-0 flex-col border-r-2 border-[#8a8a8a] bg-[#f0f0f0] px-[3px]">
          <div className="flex h-[16px] shrink-0 items-center gap-[3px]">
            <div className="h-[4px] flex-1 border-y border-[#b5b5b5]" /><span className="w-[12px] text-center text-[11px] font-bold leading-none text-black">x</span>
          </div>
          <div className="flex h-[20px] w-[237px] shrink-0 items-center justify-between bg-[#a8a8a8] pl-[7px] pr-[3px] text-[12px] font-bold text-white">
            <span className="flex items-center gap-[5px]">モデル<Tri c="#fff" s={3} /></span>
            <svg width="14" height="16" viewBox="0 0 14 16"><path d="M1 1h12v11H8l-3 3v-3H1z" fill="#fff7a8" stroke="#222" /><text x="7" y="10.500" fontSize="10" fontWeight="700" fill="#1c37a8" textAnchor="middle" fontFamily="Liberation Sans">?</text></svg>
          </div>
          <div className="flex h-[28px] shrink-0 items-center text-[12px] text-[#222]">
            <svg width="18" height="16" viewBox="0 0 18 16" className="ml-[3px]"><path d="M1 2h16l-6 7v6l-4-2V9z" fill="#8a8a8a" stroke="#333" /></svg>
            <svg width="16" height="16" viewBox="0 0 16 16" className="ml-[12px]"><path d="M3 1v13M3 5h6M3 9h9M3 13h4" stroke="#222" strokeDasharray="1 1" fill="none" /><rect x="1" y="1" width="4" height="3" fill="#fff" stroke="#222" /><rect x="8" y="7" width="4" height="3" fill="#fff" stroke="#222" /><rect x="5" y="11" width="4" height="3" fill="#fff" stroke="#222" /></svg>
            <div className="ml-[7px]"><Tri c="#222" s={3} /></div>
            <div className="ml-[4px] h-[18px] w-px bg-[#999]" />
            <svg width="16" height="16" viewBox="0 0 16 16" className="ml-[13px]"><path d="M2 3l7-2v3zM8 3h4v10H8" fill="none" stroke="#222" /><rect x="10" y="5" width="4" height="3" fill="#222" /><rect x="7" y="11" width="4" height="3" fill="#d21414" /></svg>
            <span className="ml-[5px] whitespace-pre">アセンブリ ビュー</span>
            <div className="ml-[18px]"><Tri c="#222" s={3} /></div>
          </div>
          <div className="h-[791px] w-[237px] shrink-0 overflow-hidden border border-[#7a7a7a] bg-white">
            <div className="flex h-[18px] items-center pl-[4px] text-[11px] font-bold text-black">
              <svg width="18" height="17" viewBox="0 0 18 17" className="shrink-0"><path d="M5 1h6v7H5z" fill="#7fa8d8" stroke="#123" /><rect x="1" y="8" width="8" height="8" fill="#ffd400" stroke="#123" /><rect x="9" y="8" width="8" height="8" fill="#ffd400" stroke="#123" /></svg>
              <span className="ml-[2px] text-[12px]">組み立て.iam</span>
            </div>
            {rows.map((r, i) => <TreeRow key={i} r={r} last={i === rows.length - 1} />)}
          </div>
        </div>
        <div className="relative flex-1 bg-[linear-gradient(180deg,#a3a3a3,#d3d3d3)]">
          <Model />
          <div className="absolute right-[5px] top-[8px] flex items-center gap-[9px]">
            <div className="mt-[5px] h-[3px] w-[11px] border border-[#333] bg-white" />
            <div className="h-[11px] w-[10px] border-2 border-[#333] bg-white" />
            <span className="w-[11px] text-[13px] font-bold leading-none text-[#222]">X</span>
          </div>
        </div>
      </div>

      {/* status */}
      <div className="flex h-[20px] shrink-0 items-center justify-between bg-[linear-gradient(180deg,#ffffff,#f4f4f4_30%,#c9c9c9)] pl-[2px] text-[12px] text-[#222]">
        <span className="pt-px">準備完了</span>
        <div className="flex h-full items-center">
          <span className="w-[29px]">34</span>
          <div className="h-[16px] w-px bg-[#aaa]" />
          <span className="w-[37px] pl-[7px]">20</span>
        </div>
      </div>

      {/* taskbar */}
      <div className="flex h-[40px] shrink-0 items-center border-t border-[#333] bg-[linear-gradient(90deg,#3f2b30_0%,#63444a_6%,#5c3a40_33%,#6a5a70_40%,#a9cdf0_42%,#b4d3ef_77%,#a8b6c4_81%,#6b5a5e_86%,#4a3a3e_90%,#51363c_100%)]">
        <div className="flex w-[56px] shrink-0 justify-center">
          <div className="flex h-[36px] w-[36px] items-center justify-center rounded-full border border-[#28445e] bg-[linear-gradient(180deg,#8fc1e0,#1f5d8e)]">
            <svg width="20" height="20" viewBox="0 0 20 20"><path d="M2 4l7-2v7H2z" fill="#e8532d" /><path d="M10 2l8-1v8h-8z" fill="#8bc43f" /><path d="M2 10h7v7l-7-2z" fill="#31a3e6" /><path d="M10 10h8v8l-8-1z" fill="#f4c21b" /></svg>
          </div>
        </div>
        {slots.map((s, i) => (
          <div key={i} className="flex h-[39px] w-[62px] shrink-0 items-center justify-center">
            <div className={`flex h-[39px] w-[58px] items-center justify-center rounded-[2px] ${s.a === 2 ? "border border-[#cfdbe6] bg-white/60" : s.a === 1 ? "border border-white/40 bg-white/10" : ""}`}><T n={s.n} /></div>
          </div>
        ))}
        <div className="ml-[185px] flex h-full flex-1 items-center">
          <div className="flex items-center gap-[5px]">
            <Tray n="a" /><Tray n="w" /><Tray n="b" /><Tray n="q" />
          </div>
          <div className="ml-[9px] flex w-[34px] flex-col whitespace-nowrap text-[8px] leading-[12px] text-white"><span>CAPS 口</span><span>KANA ▼</span></div>
          <div className="ml-[11px]"><svg width="8" height="5" viewBox="0 0 8 5" className="block"><path d="M4 0l4 5H0z" fill="#eee" /></svg></div>
          <div className="ml-[13px] flex items-center gap-[8px]"><Tray n="flag" /><Tray n="nv" /><Tray n="net" /><Tray n="z" /><Tray n="sp" /></div>
          <div className="ml-[16px] flex w-[70px] flex-col items-center text-[12px] leading-[20px] text-white"><span>19:51</span><span>2014/11/03</span></div>
          <div className="ml-auto h-full w-[14px] border-l border-[#777] bg-[linear-gradient(180deg,#666,#333)]" />
        </div>
      </div>
    </div>
  );
}
